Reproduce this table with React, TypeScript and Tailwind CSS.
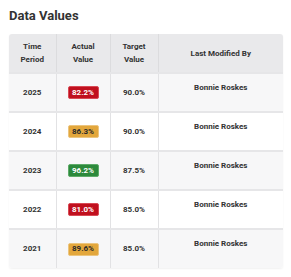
import React from "react";

type Row = { year: string; actual: string; kind: "red" | "amber" | "green"; target: string };

const rows: Row[] = [
  { year: "2025", actual: "82.2%", kind: "red", target: "90.0%" },
  { year: "2024", actual: "86.3%", kind: "amber", target: "90.0%" },
  { year: "2023", actual: "96.2%", kind: "green", target: "87.5%" },
  { year: "2022", actual: "81.0%", kind: "red", target: "85.0%" },
  { year: "2021", actual: "89.6%", kind: "amber", target: "85.0%" },
];

const badgeClass: Record<Row["kind"], string> = {
  red: "bg-[#c0101e] text-white border-[#d84a55]",
  amber: "bg-[#e3a73c] text-[#2a2a2a] border-[#ecc57f]",
  green: "bg-[#2d8a3c] text-white border-[#5eab69]",
};

export default function App() {
  return (
    <div className="w-[291px] h-[277px] bg-white pl-[9px] pt-[8px]" style={{ fontFamily: "Roboto, 'Liberation Sans', sans-serif" }}>
      <h2 className="text-[13px] leading-[16px] font-bold text-[#333333]">Data Values</h2>
      <div className="mt-[10px] w-[274px] rounded-[3px] overflow-hidden shadow-[0_1px_2px_rgba(0,0,0,0.06)]">
        <table className="w-[274px] border-collapse table-fixed text-[8px] font-bold text-[#333333]">
          <colgroup>
            <col className="w-[47px]" />
            <col className="w-[54px]" />
            <col className="w-[48px]" />
            <col className="w-[125px]" />
          </colgroup>
          <thead>
            <tr className="h-[39px] bg-[#e9e9eb]">
              <th className="border-r border-[#dcdcde] text-center leading-[13px] font-bold">Time<br />Period</th>
              <th className="border-r border-[#dcdcde] text-center leading-[13px] font-bold">Actual<br />Value</th>
              <th className="border-r border-[#dcdcde] text-center leading-[13px] font-bold">Target<br />Value</th>
              <th className="text-center leading-[13px] font-bold">Last Modified By</th>
            </tr>
          </thead>
          <tbody>
            {rows.map((r, i) => (
              <tr key={r.year} className={`h-[39px] border-t-2 border-[#e6e6e8] ${i % 2 === 0 ? "bg-[#f7f7f8]" : "bg-white"}`}>
                <td className="border-r border-[#e2e2e4] text-center align-middle">{r.year}</td>
                <td className="border-r border-[#e2e2e4] text-center align-middle">
                  <span className={`inline-flex items-center justify-center w-[31px] h-[13px] rounded-[2px] border ${badgeClass[r.kind]} text-[8px] leading-none`}>
                    {r.actual}
                  </span>
                </td>
                <td className="border-r border-[#e2e2e4] text-center align-middle">{r.target}</td>
                <td className="text-center align-top pt-[8px] leading-[12px]">Bonnie Roskes</td>
              </tr>
            ))}
          </tbody>
        </table>
      </div>
    </div>
  );
}
